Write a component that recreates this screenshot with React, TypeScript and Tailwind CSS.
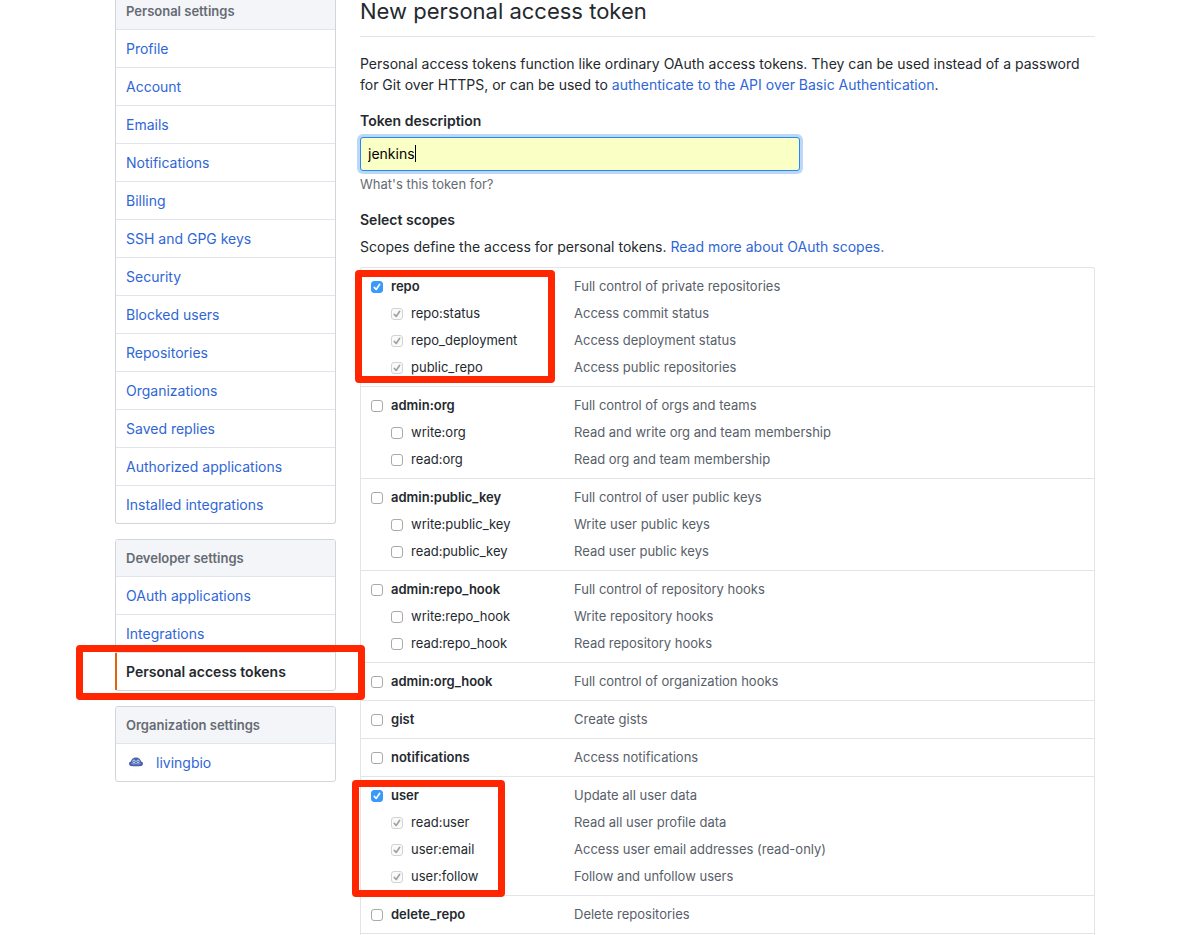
import { useState } from "react";

type Scope = { name: string; text: string };
type Group = Scope & {
  checked?: boolean;
  children?: Scope[];
  mark?: string;
};

const personal = [
  "Profile",
  "Account",
  "Emails",
  "Notifications",
  "Billing",
  "SSH and GPG keys",
  "Security",
  "Blocked users",
  "Repositories",
  "Organizations",
  "Saved replies",
  "Authorized applications",
  "Installed integrations",
];

const groups: Group[] = [
  {
    name: "repo",
    text: "Full control of private repositories",
    checked: true,
    mark: "-left-[6px] top-[2px] h-[113px] w-[200px]",
    children: [
      { name: "repo:status", text: "Access commit status" },
      { name: "repo_deployment", text: "Access deployment status" },
      { name: "public_repo", text: "Access public repositories" },
    ],
  },
  {
    name: "admin:org",
    text: "Full control of orgs and teams",
    children: [
      { name: "write:org", text: "Read and write org and team membership" },
      { name: "read:org", text: "Read org and team membership" },
    ],
  },
  {
    name: "admin:public_key",
    text: "Full control of user public keys",
    children: [
      { name: "write:public_key", text: "Write user public keys" },
      { name: "read:public_key", text: "Read user public keys" },
    ],
  },
  {
    name: "admin:repo_hook",
    text: "Full control of repository hooks",
    children: [
      { name: "write:repo_hook", text: "Write repository hooks" },
      { name: "read:repo_hook", text: "Read repository hooks" },
    ],
  },
  { name: "admin:org_hook", text: "Full control of organization hooks" },
  { name: "gist", text: "Create gists" },
  { name: "notifications", text: "Access notifications" },
  {
    name: "user",
    text: "Update all user data",
    checked: true,
    mark: "-left-[9px] top-[3px] h-[117px] w-[153px]",
    children: [
      { name: "read:user", text: "Read all user profile data" },
      { name: "user:email", text: "Access user email addresses (read-only)" },
      { name: "user:follow", text: "Follow and unfollow users" },
    ],
  },
  { name: "delete_repo", text: "Delete repositories" },
];

function Mark({ className }: { className: string }) {
  return (
    <span
      aria-hidden="true"
      className={`pointer-events-none absolute z-10 rounded-[4px] border-[7px] border-[#ff2600] ${className}`}
    />
  );
}

function Check({
  id,
  checked,
  disabled,
  onChange,
}: {
  id: string;
  checked: boolean;
  disabled?: boolean;
  onChange?: (value: boolean) => void;
}) {
  const box = disabled
    ? "border-[#d3d3d3] bg-[#fafafa]"
    : checked
      ? "border-[#3b99fc] bg-[#3b99fc]"
      : "border-[#a9a9a9] bg-white";
  return (
    <span className="grid size-3 shrink-0">
      <input
        id={id}
        type="checkbox"
        checked={checked}
        disabled={disabled}
        onChange={(e) => onChange?.(e.target.checked)}
        className={`col-start-1 row-start-1 size-3 appearance-none rounded-[3px] border ${box}`}
      />
      {checked && (
        <svg
          viewBox="0 0 12 12"
          className={`pointer-events-none col-start-1 row-start-1 size-3 ${disabled ? "text-[#a0a0a0]" : "text-white"}`}
          fill="none"
          stroke="currentColor"
          strokeWidth="1.6"
          strokeLinecap="round"
          strokeLinejoin="round"
        >
          <path d="M3.3 6.4 5.2 8.5 8.7 3.3" />
        </svg>
      )}
    </span>
  );
}

function Row({
  scope,
  child,
  checked,
  disabled,
  onChange,
}: {
  scope: Scope;
  child?: boolean;
  checked: boolean;
  disabled?: boolean;
  onChange?: (value: boolean) => void;
}) {
  return (
    <div className="flex h-[27px] items-center text-[13px]">
      <div className={`flex w-[213px] items-center gap-2 ${child ? "pl-[30px]" : "pl-[10px]"}`}>
        <Check id={scope.name} checked={checked} disabled={disabled} onChange={onChange} />
        <label htmlFor={scope.name} className={child ? "" : "font-semibold"}>
          {scope.name}
        </label>
      </div>
      <span className="text-[#586069]">{scope.text}</span>
    </div>
  );
}

function ScopeGroup({ group }: { group: Group }) {
  const [all, setAll] = useState(!!group.checked);
  const [picked, setPicked] = useState<string[]>([]);
  return (
    <li className="relative border-b border-[#e1e4e8] py-[5px]">
      <Row scope={group} checked={all} onChange={setAll} />
      {group.children?.map((c) => (
        <Row
          key={c.name}
          scope={c}
          child
          checked={all || picked.includes(c.name)}
          disabled={all}
          onChange={(on) =>
            setPicked(on ? [...picked, c.name] : picked.filter((n) => n !== c.name))
          }
        />
      ))}
      {group.mark && <Mark className={group.mark} />}
    </li>
  );
}

const headingClass =
  "border-b border-[#e1e4e8] bg-[#f3f5f9] px-[10px] text-[13px] font-semibold text-[#666b73]";
const linkClass = "flex h-[37px] items-center px-[10px] text-[#2f66d6]";
const menuClass = "mb-[15px] rounded-[3px] border border-[#d1d5da]";

export default function App() {
  const [description, setDescription] = useState("jenkins");
  return (
    <div className="flex min-h-screen gap-6 bg-white pr-[93px] pl-[115px] font-['Inter','Liberation_Sans',sans-serif] text-sm text-[#24292e]">
      <aside className="w-[221px] shrink-0">
        <nav className={`${menuClass} rounded-t-none border-t-0`} aria-label="Personal settings">
          <h2 className={`${headingClass} h-[30px] leading-[22px]`}>Personal settings</h2>
          <ul className="divide-y divide-[#e1e4e8]">
            {personal.map((item) => (
              <li key={item}>
                <a href="#" className={linkClass}>
                  {item}
                </a>
              </li>
            ))}
          </ul>
        </nav>
        <nav className={menuClass} aria-label="Developer settings">
          <h2 className={`${headingClass} h-[37px] rounded-t-[2px] leading-[36px]`}>
            Developer settings
          </h2>
          <ul className="divide-y divide-[#e1e4e8]">
            <li>
              <a href="#" className={linkClass}>
                OAuth applications
              </a>
            </li>
            <li>
              <a href="#" className={linkClass}>
                Integrations
              </a>
            </li>
            <li className="relative">
              <a
                href="#"
                aria-current="page"
                className="flex h-[37px] items-center px-[10px] font-semibold"
              >
                Personal access tokens
              </a>
              <span className="absolute inset-y-0 -left-px w-[2px] bg-[#e36209]" />
              <Mark className="-top-[8px] -left-[40px] h-[55px] w-[289px]" />
            </li>
          </ul>
        </nav>
        <nav className={menuClass} aria-label="Organization settings">
          <h2 className={`${headingClass} h-[37px] rounded-t-[2px] leading-[36px]`}>
            Organization settings
          </h2>
          <a href="#" className={`${linkClass} gap-[10px]`}>
            <svg viewBox="0 0 20 20" className="size-5" aria-hidden="true">
              <circle cx="10" cy="10" r="9.5" fill="none" stroke="#eef0f2" strokeWidth=".5" strokeDasharray="1 2" />
              <path
                fill="#4460ae"
                d="M3 10.800c0-1.200.8-2 1.900-2.200C5.200 6.300 7.200 4.600 10 4.600s4.800 1.700 5.100 4c1.100.2 1.900 1 1.900 2.200 0 1.700-1.600 2.500-3.500 2.500H6.500C4.600 13.300 3 12.500 3 10.800z"
              />
              <g fill="none" stroke="#fff" strokeWidth=".7">
                <circle cx="8" cy="8.300" r="1.300" />
                <circle cx="12" cy="8.300" r="1.300" />
                <path d="M5.500 10.300c1.500.9 3 .8 4.500.2 1.500.6 3 .7 4.500-.2" strokeWidth=".5" />
              </g>
            </svg>
            livingbio
          </a>
        </nav>
      </aside>

      <main className="flex min-w-0 flex-1 flex-col">
        <h1 className="h-[37px] border-b border-[#e1e4e8] text-[22px] leading-[22px]">
          New personal access token
        </h1>
        <p className="mt-4 leading-[21px]">
          Personal access tokens function like ordinary OAuth access tokens. They can be used
          instead of a password for Git over HTTPS, or can be used to{" "}
          <a href="#" className="text-[#2f66d6]">
            authenticate to the API over Basic Authentication
          </a>
          .
        </p>
        <label htmlFor="description" className="mt-[15px] leading-[21px] font-semibold">
          Token description
        </label>
        <div className="relative mt-[6px] w-[440px] max-w-full">
          <input
            id="description"
            type="text"
            value={description}
            onChange={(e) => setDescription(e.target.value)}
            className="block h-[34px] w-full rounded-[3px] border border-[#2188ff] bg-[#faffc6] px-[7px] pb-[2px] text-black shadow-[0_0_0_3px_#bdd7f7] outline-none"
          />
          <span aria-hidden="true" className="absolute top-[8px] left-[55px] h-[17px] w-px bg-black" />
        </div>
        <p className="mt-[4px] text-[13px] leading-[18px] text-[#666b73]">What's this token for?</p>
        <h2 className="mt-4 leading-[21px] font-semibold">Select scopes</h2>
        <p className="mt-[6px] mb-[10px] leading-[21px]">
          Scopes define the access for personal tokens.{" "}
          <a href="#" className="text-[#2f66d6]">
            Read more about OAuth scopes.
          </a>
        </p>
        <ul className="flex-1 rounded-t-[3px] border border-b-0 border-[#e1e4e8]">
          {groups.map((g) => (
            <ScopeGroup key={g.name} group={g} />
          ))}
        </ul>
      </main>
    </div>
  );
}
